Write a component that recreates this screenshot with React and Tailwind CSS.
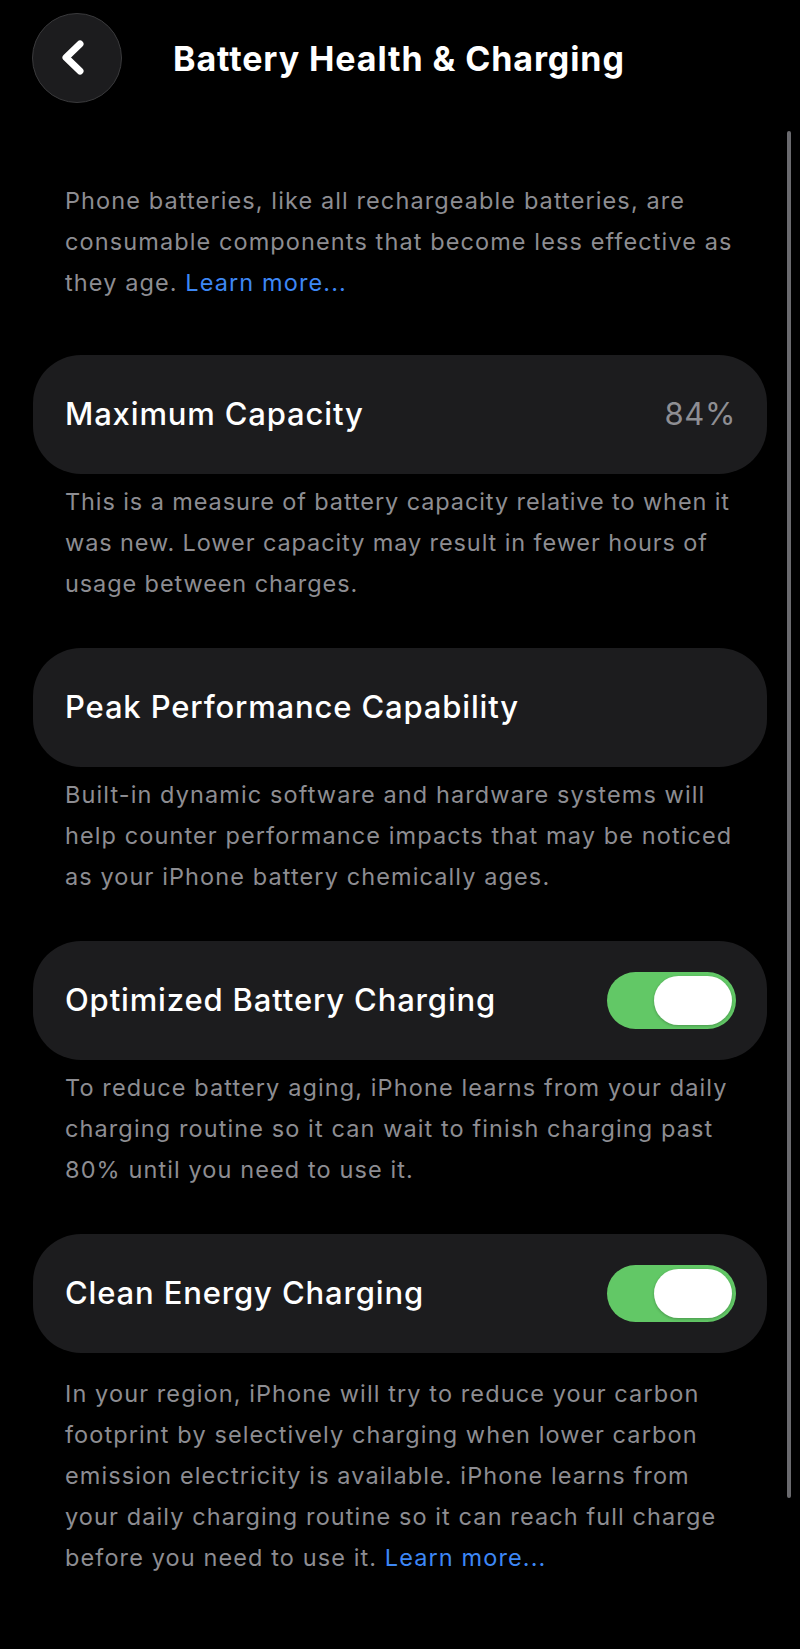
import React, { useState } from "react";

const fontStack = { fontFamily: "Inter, 'Noto Sans', sans-serif" };

const Toggle = ({ on, onChange }) => (
  <button
    onClick={() => onChange(!on)}
    className={`w-[129px] h-[57px] rounded-full p-[4px] flex items-center ${on ? "bg-[#62c866] justify-end" : "bg-[#39393d] justify-start"}`}
  >
    <span className="block w-[78px] h-[49px] rounded-full bg-white shadow-[0_1px_3px_rgba(0,0,0,0.25)]" />
  </button>
);

const Row = ({ label, children }) => (
  <div className="h-[119px] rounded-[48px] bg-[#1c1c1e] flex items-center justify-between pl-[32px] pr-[31px]">
    <span className="text-[31px] font-medium text-white tracking-[0.85px]">{label}</span>
    {children}
  </div>
);

const Note = ({ children, tight = false, className = "" }) => (
  <p
    className={`pl-[32px] pr-[26px] text-[23.5px] leading-[41px] text-[#8d8d92] ${tight ? "tracking-[0.9px]" : "tracking-[1.1px]"} ${className}`}
  >
    {children}
  </p>
);

const LearnMore = () => <span className="text-[#3d87f5]">Learn more...</span>;

export default function App() {
  const [optimized, setOptimized] = useState(true);
  const [cleanEnergy, setCleanEnergy] = useState(true);

  return (
    <div className="relative w-[800px] min-h-[1649px] bg-black" style={fontStack}>
      {/* scroll indicator */}
      <div className="absolute right-[9px] top-[131px] w-[4px] h-[1367px] rounded-full bg-[#6a6a6e]" />

      <header className="flex items-center pt-[13px] pl-[32px]">
        <button className="w-[90px] h-[90px] rounded-full bg-[#1c1c1e] border border-[#3a3a3c] flex items-center justify-center">
          <svg width="40" height="40" viewBox="0 0 40 40" fill="none">
            <path d="M23 6 L9 19.5 L23 33" stroke="white" strokeWidth="7" strokeLinecap="round" strokeLinejoin="round" />
          </svg>
        </button>
        <h1 className="ml-[51px] text-[34px] font-bold text-white tracking-[0.9px]">Battery Health &amp; Charging</h1>
      </header>

      <main className="px-[33px] pb-[60px]">
        <Note className="mt-[77px]">
          Phone batteries, like all rechargeable batteries, are consumable components that become less effective as they age. <LearnMore />
        </Note>

        <div className="mt-[52px]">
          <Row label="Maximum Capacity">
            <span className="text-[31px] tracking-[0.6px] text-[#8e8e93]">84%</span>
          </Row>
          <Note tight className="mt-[7px]">
            This is a measure of battery capacity relative to when it was new. Lower capacity may result in fewer hours of usage between charges.
          </Note>
        </div>

        <div className="mt-[44px]">
          <Row label="Peak Performance Capability" />
          <Note className="mt-[7px]">
            Built-in dynamic software and hardware systems will help counter performance impacts that may be noticed as your iPhone battery chemically ages.
          </Note>
        </div>

        <div className="mt-[44px]">
          <Row label="Optimized Battery Charging">
            <Toggle on={optimized} onChange={setOptimized} />
          </Row>
          <Note className="mt-[7px]">
            To reduce battery aging, iPhone learns from your daily charging routine so it can wait to finish charging past 80% until you need to use it.
          </Note>
        </div>

        <div className="mt-[44px]">
          <Row label="Clean Energy Charging">
            <Toggle on={cleanEnergy} onChange={setCleanEnergy} />
          </Row>
          <Note className="mt-[20px]">
            In your region, iPhone will try to reduce your carbon footprint by selectively charging when lower carbon emission electricity is available. iPhone learns from your daily charging routine so it can reach full charge before you need to use it. <LearnMore />
          </Note>
        </div>
      </main>
    </div>
  );
}
